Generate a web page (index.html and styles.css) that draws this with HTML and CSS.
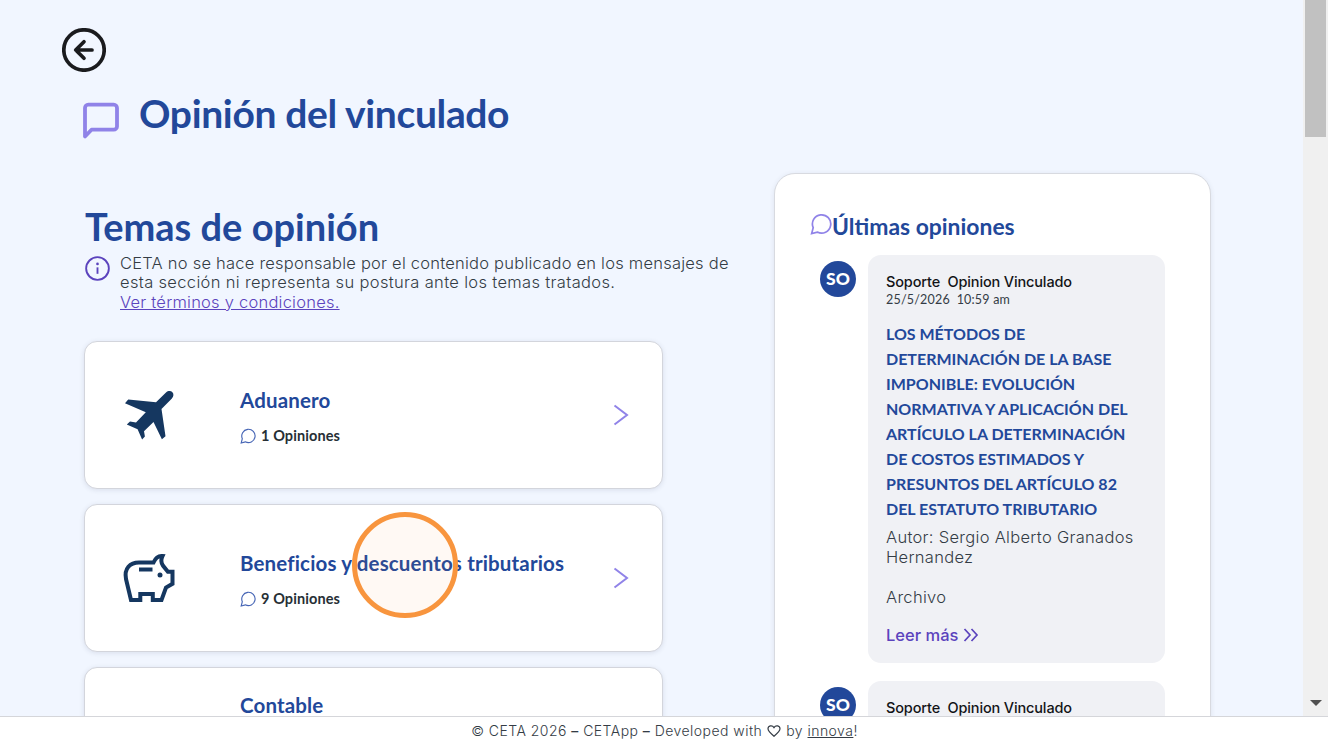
FILE: index.html
```html
<!DOCTYPE html>
<html lang="es">
<head>
    <meta charset="UTF-8">
    <meta name="viewport" content="width=device-width, initial-scale=1.0">
    <title>Opinión del vinculado</title>
    <link rel="stylesheet" href="styles.css">
</head>
<body>
    <svg class="symbols">
        <symbol id="bubble" viewBox="0 0 24 24">
            <path d="M1.8 22.5l1.700-6.500A10 10 0 1 1 8 20.800z"/>
        </symbol>
        <symbol id="chevron" viewBox="0 0 16 22">
            <path d="M1.5 1.5L14 11L1.5 20.5"/>
        </symbol>
    </svg>

    <div class="viewport">
        <main class="page">
            <a class="back" href="#">
                <svg viewBox="0 0 44 44">
                    <circle cx="22" cy="22" r="20.2"/>
                    <path d="M30 22H14M22 13.7L13.7 22L22 30.3"/>
                </svg>
            </a>

            <div class="page-title">
                <svg class="title-icon" viewBox="0 0 38 38">
                    <path d="M3 34.5V6a3.3 3.3 0 0 1 3.3-3.3h25.4A3.3 3.3 0 0 1 35 6v18.4a3.3 3.3 0 0 1-3.3 3.3H9.5z"/>
                </svg>
                <h1>Opinión del vinculado</h1>
            </div>

            <div class="columns">
                <section class="topics">
                    <h2>Temas de opinión</h2>
                    <div class="notice">
                        <svg class="info-icon" viewBox="0 0 24 24">
                            <circle cx="12" cy="12" r="10.9"/>
                            <path d="M12 10.9v6.2"/>
                            <circle class="dot" cx="12" cy="7.6" r="1.3"/>
                        </svg>
                        <p>
                            CETA no se hace responsable por el contenido publicado en los mensajes de<br>
                            <span class="second-line">esta sección ni representa su postura ante los temas tratados.</span><br>
                            <a href="#">Ver términos y condiciones.</a>
                        </p>
                    </div>

                    <div class="card">
                        <svg class="card-icon plane" viewBox="0 0 52 52">
                            <path d="M43 3.5c2.1-1.9 5-1.8 6.4-.3 1.5 1.6 1.4 4.2-.5 6.2L38.5 20l4 27.2-3.6 3L30.5 33l-9.500 9.200.9 5.300-2.800 3-4.500-10.200-10.800-4.700 3.200-3 6 .8 9.800-10.200L2 14.200l3.200-3.600L33 13.200z"/>
                        </svg>
                        <div class="card-body">
                            <h3>Aduanero</h3>
                            <span class="count"><svg><use href="#bubble"/></svg>1 Opiniones</span>
                        </div>
                        <svg class="arrow"><use href="#chevron"/></svg>
                    </div>

                    <div class="card">
                        <svg class="card-icon pig" viewBox="0 0 52 52">
                            <path d="M8 48L3 27C1 16.5 7 10.5 16 10.5h14.5c2-4.5 5-7 9-6.5-1.8 3.5-1.5 6.5.4 9.5l5 6.3h4.6v12l-6.5 3.7-4.5 12.500h-8.700v-6h-12.500v6z"/>
                            <path d="M16 17.5h13.5"/>
                            <circle class="dot" cx="37" cy="23" r="2.5"/>
                        </svg>
                        <div class="card-body">
                            <h3>Beneficios y descuentos tributarios</h3>
                            <span class="count"><svg><use href="#bubble"/></svg>9 Opiniones</span>
                        </div>
                        <svg class="arrow"><use href="#chevron"/></svg>
                        <span class="click-marker"></span>
                    </div>

                    <div class="card card-top">
                        <div class="card-icon"></div>
                        <div class="card-body">
                            <h3>Contable</h3>
                        </div>
                    </div>
                </section>

                <aside class="latest">
                    <h2><svg><use href="#bubble"/></svg>Últimas opiniones</h2>

                    <div class="opinion">
                        <div class="avatar">SO</div>
                        <div class="message">
                            <strong class="author">Soporte&nbsp; Opinion Vinculado</strong>
                            <span class="date">25/5/2026&nbsp; 10:59 am</span>
                            <h4>
                                LOS MÉTODOS DE<br>
                                DETERMINACIÓN DE LA BASE<br>
                                IMPONIBLE: EVOLUCIÓN<br>
                                NORMATIVA Y APLICACIÓN DEL<br>
                                ARTÍCULO LA DETERMINACIÓN<br>
                                DE COSTOS ESTIMADOS Y<br>
                                PRESUNTOS DEL ARTÍCULO 82<br>
                                DEL ESTATUTO TRIBUTARIO
                            </h4>
                            <p>Autor: Sergio Alberto Granados Hernandez</p>
                            <p class="file">Archivo</p>
                            <a class="more" href="#">Leer más
                                <svg viewBox="0 0 16 14"><path d="M1.5 1L7 7L1.5 13M8.5 1L14 7L8.5 13"/></svg>
                            </a>
                        </div>
                    </div>

                    <div class="opinion">
                        <div class="avatar">SO</div>
                        <div class="message">
                            <strong class="author">Soporte&nbsp; Opinion Vinculado</strong>
                        </div>
                    </div>
                </aside>
            </div>
        </main>

        <div class="scrollbar">
            <div class="thumb"></div>
            <svg viewBox="0 0 12 6"><path d="M0 0h12L6 6z"/></svg>
        </div>
    </div>

    <footer>
        <span>© CETA 2026 <b>–</b> CETApp <b>–</b> Developed with</span>
        <svg viewBox="0 0 14 12"><path d="M7 11.2C3.5 8.3 1 6.3 1 3.8 1 .6 5.3-.2 7 2.6 8.7-.2 13 .6 13 3.8c0 2.5-2.5 4.5-6 7.4z"/></svg>
        <span>by <a href="#">innova</a>!</span>
    </footer>
</body>
</html>
```

FILE: styles.css
```css
* {
    box-sizing: border-box;
}

body {
    margin: 0;
    height: 743px;
    display: flex;
    flex-direction: column;
    overflow: hidden;
    font-family: Inter, sans-serif;
    color: #343c45;
    background-color: white;
}

h1, h2, h3, h4, p {
    margin: 0;
}

h1, h2, h3, h4 {
    font-family: Lato, sans-serif;
    font-weight: bold;
    color: #22489a;
    white-space: nowrap;
}

svg {
    flex-shrink: 0;
    fill: none;
    stroke: currentColor;
}

.dot {
    fill: currentColor;
    stroke: none;
}

.symbols {
    display: none;
}

.viewport {
    height: 716px;
    display: flex;
    overflow: hidden;
}

.page {
    width: 1303px;
    padding: 28px 0 0 62px;
    background-color: #f1f6ff;
}

.back {
    display: block;
    width: 44px;
    height: 44px;
    color: #1a1b1e;
}

.back svg {
    display: block;
    stroke-width: 3.7;
    stroke-linecap: round;
    stroke-linejoin: round;
}

.page-title {
    display: flex;
    height: 101px;
    padding: 17px 0 0 20px;
}

.title-icon {
    width: 38px;
    height: 38px;
    margin: 13px 19px 0 0;
    color: #9083e8;
    stroke-width: 3.8;
    stroke-linejoin: round;
}

h1 {
    font-size: 39px;
    line-height: 48px;
    letter-spacing: -0.35px;
}

.columns {
    display: flex;
    align-items: flex-start;
    padding-left: 22px;
}

.topics {
    width: 690px;
    padding-top: 29px;
}

.topics h2 {
    padding-left: 1px;
    font-size: 38px;
    line-height: 48px;
}

.notice {
    display: flex;
    height: 91px;
    padding-top: 2px;
}

.info-icon {
    width: 25px;
    height: 25px;
    margin: 4px 10px 0 1px;
    color: #5b43bd;
    stroke-width: 1.8;
}

.notice p {
    padding-top: 2px;
    font-size: 16.5px;
    font-weight: 300;
    line-height: 19.4px;
    letter-spacing: 0.23px;
    white-space: nowrap;
}

.second-line {
    letter-spacing: 0.34px;
}

.notice a {
    color: #5b43bd;
}

.card {
    position: relative;
    display: flex;
    align-items: center;
    width: 579px;
    height: 148px;
    margin-bottom: 15px;
    padding: 0 33px 0 37px;
    background-color: white;
    border: 1px solid #d3d5dc;
    border-radius: 13px;
    box-shadow: 0 1px 5px rgba(50, 60, 90, 0.12);
}

.card-icon {
    width: 54px;
    height: 52px;
    margin-right: 64px;
    color: #153760;
}

.plane {
    fill: currentColor;
    stroke: none;
}

.pig {
    stroke-width: 4;
}

.card-body {
    flex-grow: 1;
    padding-top: 2px;
}

.card-top {
    align-items: flex-start;
    padding-top: 21px;
}

h3 {
    font-size: 20.5px;
    line-height: 28px;
    letter-spacing: 0.15px;
}

.count {
    display: flex;
    align-items: center;
    margin-top: 12px;
    font-family: Lato, sans-serif;
    font-size: 14.5px;
    font-weight: bold;
    line-height: 20px;
    letter-spacing: 0.1px;
    color: #272f35;
}

.count svg {
    width: 16px;
    height: 16px;
    margin-right: 5px;
    color: #4665b5;
    stroke-width: 1.7;
}

.arrow {
    width: 16px;
    height: 22px;
    color: #9083e8;
    stroke-width: 2;
}

.click-marker {
    position: absolute;
    top: 7px;
    left: 267px;
    width: 106px;
    height: 106px;
    border: 5px solid #f8953e;
    border-radius: 50%;
    background-color: rgba(248, 149, 62, 0.06);
}

.latest {
    width: 437px;
    height: 640px;
    padding: 36px 45px 0 35px;
    background-color: white;
    border: 1px solid #d8dae0;
    border-radius: 21px;
    box-shadow: 0 1px 5px rgba(50, 60, 90, 0.1);
}

.latest h2 {
    display: flex;
    font-size: 22.9px;
    line-height: 32px;
}

.latest h2 svg {
    width: 22px;
    height: 22px;
    margin-top: 3px;
    color: #9083e8;
    stroke-width: 1.9;
}

.opinion {
    display: flex;
    align-items: flex-start;
    margin: 13px 0 18px 10px;
}

.opinion + .opinion {
    margin-top: 0;
}

.avatar {
    width: 36px;
    height: 36px;
    margin: 6px 12px 0 0;
    border-radius: 50%;
    background-color: #22489a;
    color: white;
    font-family: Lato, sans-serif;
    font-size: 17.5px;
    font-weight: 900;
    line-height: 36px;
    text-align: center;
}

.message {
    display: flex;
    flex-direction: column;
    width: 297px;
    padding: 18px 18px 17px;
    border-radius: 13px;
    background-color: #f0f1f5;
}

.author {
    font-size: 14.5px;
    font-weight: 500;
    line-height: 18px;
    letter-spacing: -0.14px;
    color: #131417;
}

.date {
    font-family: Lato, sans-serif;
    font-size: 12.5px;
    line-height: 18px;
    letter-spacing: 0.2px;
}

h4 {
    margin: 12px 0 6px;
    font-size: 16px;
    line-height: 25px;
}

.message p {
    font-size: 16.5px;
    font-weight: 300;
    line-height: 20px;
    letter-spacing: 0.3px;
}

.message .file {
    margin: 20px 0 17px;
}

.more {
    display: flex;
    align-items: center;
    gap: 5px;
    font-size: 16.5px;
    font-weight: 500;
    line-height: 22px;
    color: #5b43bd;
    text-decoration: none;
}

.more svg {
    width: 16px;
    height: 14px;
    stroke-width: 1.7;
}

.scrollbar {
    display: flex;
    flex-direction: column;
    justify-content: space-between;
    align-items: center;
    width: 25px;
    padding-bottom: 10px;
    background-color: #f0f0f0;
}

.thumb {
    width: 21px;
    height: 137px;
    background-color: #c1c1c1;
}

.scrollbar svg {
    width: 12px;
    height: 6px;
    fill: #505050;
    stroke: none;
}

footer {
    display: flex;
    justify-content: center;
    align-items: center;
    gap: 5px;
    height: 27px;
    padding: 1px 0 0 1px;
    border-top: 1px solid #d5d6da;
    font-size: 14px;
    font-weight: 300;
    letter-spacing: 0.46px;
    background-color: white;
}

footer b {
    font-weight: 500;
}

footer svg {
    width: 14px;
    height: 12px;
    stroke-width: 1.2;
}

footer a {
    color: inherit;
}
```
